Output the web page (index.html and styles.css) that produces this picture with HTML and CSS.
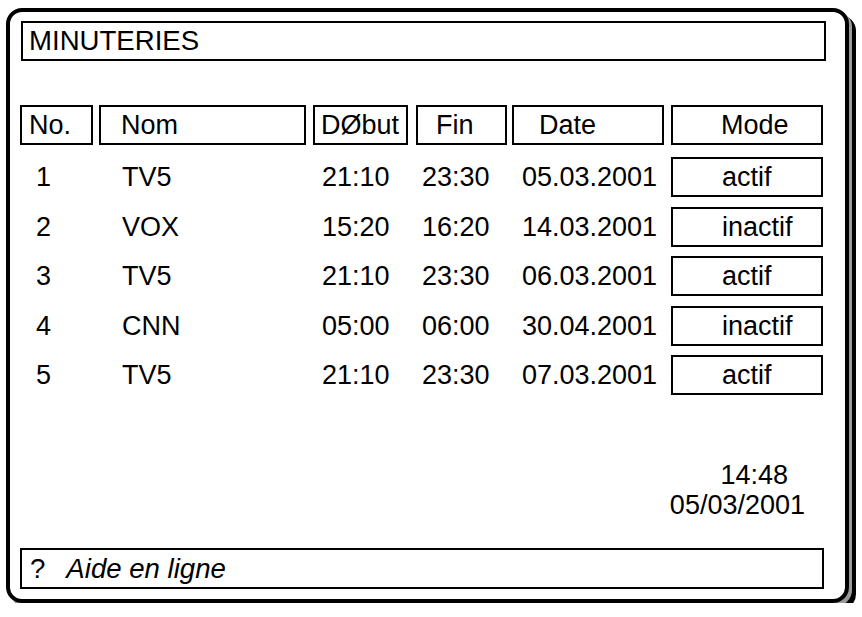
FILE: index.html
```html
<!DOCTYPE html>
<html>
<head>
<meta charset="utf-8">
<link rel="stylesheet" href="styles.css">
</head>
<body>
<div class="frame">
  <div class="title">MINUTERIES</div>
  <div class="grid head">
    <div class="hb no">No.</div>
    <div class="hb nom">Nom</div>
    <div class="hb deb">DØbut</div>
    <div class="hb fin">Fin</div>
    <div class="hb date">Date</div>
    <div class="hb mode">Mode</div>
  </div>
  <div class="rows">
    <div class="grid row">
      <div class="c no">1</div><div class="c nom">TV5</div><div class="c deb">21:10</div><div class="c fin">23:30</div><div class="c date">05.03.2001</div><div class="mb">actif</div>
    </div>
    <div class="grid row">
      <div class="c no">2</div><div class="c nom">VOX</div><div class="c deb">15:20</div><div class="c fin">16:20</div><div class="c date">14.03.2001</div><div class="mb">inactif</div>
    </div>
    <div class="grid row">
      <div class="c no">3</div><div class="c nom">TV5</div><div class="c deb">21:10</div><div class="c fin">23:30</div><div class="c date">06.03.2001</div><div class="mb">actif</div>
    </div>
    <div class="grid row">
      <div class="c no">4</div><div class="c nom">CNN</div><div class="c deb">05:00</div><div class="c fin">06:00</div><div class="c date">30.04.2001</div><div class="mb">inactif</div>
    </div>
    <div class="grid row">
      <div class="c no">5</div><div class="c nom">TV5</div><div class="c deb">21:10</div><div class="c fin">23:30</div><div class="c date">07.03.2001</div><div class="mb">actif</div>
    </div>
  </div>
  <div class="clock">
    <div class="time">14:48</div>
    <div class="day">05/03/2001</div>
  </div>
  <div class="help"><span class="q">?</span><span class="htext">Aide en ligne</span></div>
</div>
</body>
</html>
```

FILE: styles.css
```css
* { box-sizing: border-box; }

body {
  margin: 0;
  background: #fff;
  font-family: "Liberation Sans", Arial, sans-serif;
  font-size: 27px;
  color: #000;
}

.frame {
  margin: 8px 0 0 6px;
  width: 843px;
  height: 595px;
  border: 4px solid #000;
  border-radius: 16px;
  box-shadow: 3px 3px 0 #9a9a9a, 7px 7px 0 #000;
  padding: 9px 19px 10px 10px;
  display: flex;
  flex-direction: column;
}

.title {
  margin-left: 1px;
  width: 805px;
  height: 40px;
  border: 2px solid #000;
  font-size: 27.6px;
  line-height: 36px;
  padding-left: 6px;
}

.grid {
  display: grid;
  grid-template-columns: 79px 214px 103px 96px 159px 152px;
  height: 40px;
}

.head { margin-top: 44px; }

.hb {
  border: 2px solid #000;
  line-height: 36px;
  height: 40px;
  justify-self: start;
  white-space: nowrap;
}
.hb.no { width: 73px; padding-left: 7px; }
.hb.nom { width: 207px; padding-left: 20px; }
.hb.deb { width: 95px; padding-left: 6px; }
.hb.fin { width: 91px; padding-left: 18px; }
.hb.date { width: 152px; padding-left: 25px; }
.hb.mode { width: 152px; padding-left: 48px; }

.rows {
  margin-top: 12px;
  display: flex;
  flex-direction: column;
  gap: 9.5px;
}

.c {
  line-height: 40px;
  white-space: nowrap;
}
.c.no { padding-left: 16px; }
.c.nom { padding-left: 23px; }
.c.deb { padding-left: 9px; }
.c.fin { padding-left: 6px; }
.c.date { padding-left: 10px; }

.mb {
  border: 2px solid #000;
  height: 40px;
  line-height: 36px;
  padding-left: 49px;
}

.clock {
  margin-top: 65px;
  margin-right: 21px;
  display: flex;
  flex-direction: column;
  align-items: flex-end;
  line-height: 30px;
}
.clock .time { padding-right: 17px; }

.help {
  margin-top: auto;
  width: 804px;
  height: 41px;
  border: 2px solid #000;
  font-size: 27.6px;
  line-height: 37px;
  padding-left: 8px;
  white-space: nowrap;
}
.help .htext {
  font-style: italic;
  margin-left: 21px;
}
```
